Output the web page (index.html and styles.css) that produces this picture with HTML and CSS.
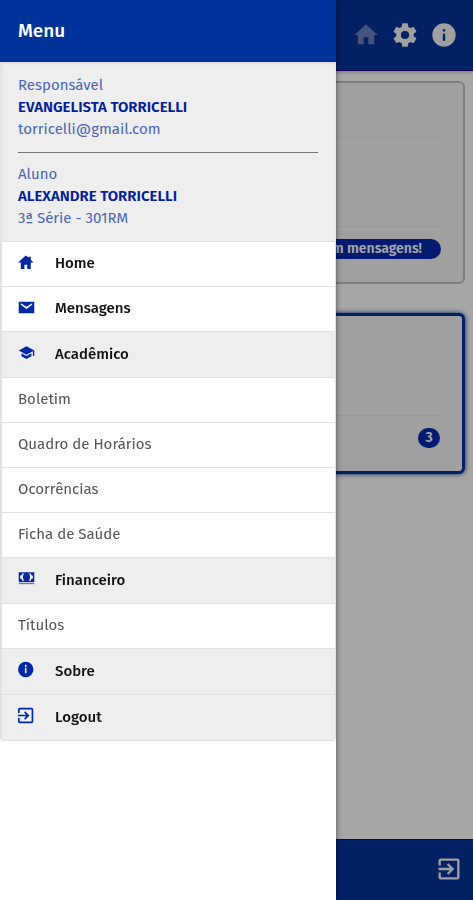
FILE: index.html
```html
<!DOCTYPE html>
<html lang="pt-BR">
<head>
<meta charset="utf-8">
<meta name="viewport" content="width=device-width, initial-scale=1">
<title>Menu</title>
<link rel="stylesheet" href="styles.css">
</head>
<body>
<svg class="sprite" aria-hidden="true">
  <symbol id="home" viewBox="0 0 24 24"><path d="M10 20v-6h4v6h5v-8h3L12 3 2 12h3v8z"/></symbol>
  <symbol id="home-small" viewBox="1 0 24 24"><path d="M10 21v-6h4v6h5v-9h4l-4-4V4h-3v1l-4-3L1 12h4v9z"/></symbol>
  <symbol id="mail" viewBox="0 0 24 24"><path d="M1 4h22v16H1zM4 6v2l8 6 8-6V6l-8 5z" fill-rule="evenodd"/></symbol>
  <symbol id="school" viewBox="1 0 22 24"><path d="M5 13.180v4L12 21l7-3.820v-4L12 17zM12 3L1 9l11 6 9-4.910V17h2V9z"/></symbol>
  <symbol id="cash" viewBox="0 0 24 24"><path fill-rule="evenodd" d="M1 3h22v14H1zM6 5a3 3 0 0 1-3 3v4a3 3 0 0 1 3 3h12a3 3 0 0 1 3-3V8a3 3 0 0 1-3-3z"/><ellipse cx="12" cy="10" rx="5" ry="6"/><path d="M1 18h22v2H1z" opacity=".6"/></symbol>
  <symbol id="info" viewBox="0 0 24 24"><path d="M12 2a10 10 0 1 0 0 20 10 10 0 0 0 0-20zm1 15h-2v-6h2zm0-8h-2V7h2z"/></symbol>
  <symbol id="info-small" viewBox="2 1 22 22"><path d="M12 2a10 10 0 1 0 0 20 10 10 0 0 0 0-20zm1 15h-2v-7h2zm0-8h-2V6h2z"/></symbol>
  <symbol id="gear" viewBox="0 0 24 24"><path d="M19.430 12.980c.04-.32.07-.64.07-.98s-.03-.66-.07-.98l2.110-1.650c.19-.15.24-.42.12-.64l-2-3.460c-.12-.22-.39-.3-.61-.22l-2.490 1c-.52-.4-1.080-.73-1.690-.98l-.38-2.650C14.460 2.180 14.250 2 14 2h-4c-.25 0-.46.18-.49.42l-.38 2.650c-.61.25-1.170.59-1.690.98l-2.490-1c-.23-.09-.49 0-.61.22l-2 3.460c-.13.22-.07.49.12.64l2.110 1.650c-.04.32-.07.65-.07.98s.03.66.07.98l-2.110 1.650c-.19.15-.24.42-.12.64l2 3.460c.12.22.39.3.61.22l2.490-1c.52.4 1.080.73 1.690.98l.38 2.650c.03.24.24.42.49.42h4c.25 0 .46-.18.49-.42l.38-2.650c.61-.25 1.170-.59 1.690-.98l2.490 1c.23.09.49 0 .61-.22l2-3.460c.12-.22.07-.49-.12-.64zM12 15.500a3.500 3.500 0 1 1 0-7 3.500 3.500 0 0 1 0 7z"/></symbol>
  <symbol id="exit" viewBox="0 0 24 24"><path d="M10.090 15.590L11.500 17l5-5-5-5-1.410 1.410L12.670 11H3v2h9.670zM19 3H5a2 2 0 0 0-2 2v4h2V5h14v14H5v-4H3v4a2 2 0 0 0 2 2h14a2 2 0 0 0 2-2V5a2 2 0 0 0-2-2z"/></symbol>
  <symbol id="exit-small" viewBox="3 2 20 20"><use href="#exit" width="24" height="24"/></symbol>
</svg>

<div class="page">
  <header class="topbar">
    <button class="tool" type="button" aria-label="Home" disabled><svg><use href="#home"/></svg></button>
    <button class="tool" type="button" aria-label="Configurações"><svg><use href="#gear"/></svg></button>
    <button class="tool" type="button" aria-label="Sobre"><svg><use href="#info"/></svg></button>
  </header>
  <main class="cards">
    <section class="card">
      <div class="card-head"></div>
      <div class="card-body"></div>
      <div class="card-foot"><span class="badge">Sem mensagens!</span></div>
    </section>
    <section class="card card-active">
      <div class="card-body"></div>
      <div class="card-foot"><span class="badge">3</span></div>
    </section>
  </main>
  <footer class="bottombar">
    <button class="tool" type="button" aria-label="Logout"><svg><use href="#exit"/></svg></button>
  </footer>
</div>

<div class="backdrop"></div>

<aside class="drawer">
  <h1 class="drawer-title">Menu</h1>
  <div class="profile">
    <div class="person">
      <p>Responsável</p>
      <p class="name">EVANGELISTA TORRICELLI</p>
      <p>torricelli@gmail.com</p>
    </div>
    <div class="person">
      <p>Aluno</p>
      <p class="name">ALEXANDRE TORRICELLI</p>
      <p>3ª Série - 301RM</p>
    </div>
  </div>
  <nav class="menu">
    <a class="item main" href="#"><svg><use href="#home-small"/></svg>Home</a>
    <a class="item main" href="#"><svg><use href="#mail"/></svg>Mensagens</a>
    <a class="item main shaded" href="#"><svg><use href="#school"/></svg>Acadêmico</a>
    <a class="item" href="#">Boletim</a>
    <a class="item" href="#">Quadro de Horários</a>
    <a class="item" href="#">Ocorrências</a>
    <a class="item" href="#">Ficha de Saúde</a>
    <a class="item main shaded" href="#"><svg><use href="#cash"/></svg>Financeiro</a>
    <a class="item" href="#">Títulos</a>
    <a class="item main shaded" href="#"><svg><use href="#info-small"/></svg>Sobre</a>
    <a class="item main shaded" href="#"><svg><use href="#exit-small"/></svg>Logout</a>
  </nav>
</aside>
</body>
</html>
```
FILE: styles.css
```css
* {
  box-sizing: border-box;
}

body {
  margin: 0;
  font-family: "Fira Sans", "Noto Sans", sans-serif;
  font-size: 15px;
  line-height: 22px;
  background: #fff;
}

h1,
p {
  margin: 0;
}

svg {
  display: block;
  fill: currentColor;
}

.sprite {
  display: none;
}

.page {
  display: flex;
  flex-direction: column;
  min-height: 100vh;
}

.topbar,
.bottombar {
  display: flex;
  align-items: center;
  justify-content: flex-end;
  background: #039;
}

.topbar {
  gap: 11px;
  height: 71px;
  padding: 0 15px;
  border-bottom: 1px solid #1e0080;
  box-shadow: 0 1px 4px rgba(0, 0, 0, 0.3);
}

.bottombar {
  height: 61px;
  padding: 0 10px 2px;
  border-top: 1px solid #1e0080;
}

.tool {
  padding: 0;
  border: 0;
  background: none;
  color: #f4f4f4;
}

.tool svg {
  width: 28px;
  height: 28px;
}

.tool:disabled {
  color: #6a82bc;
}

.cards {
  display: flex;
  flex: 1;
  flex-direction: column;
  gap: 29px;
  padding: 10px 8px;
}

.card {
  padding: 0 22px 11px;
  border: 2px solid #c0c0c0;
  border-radius: 6px;
  background: #f6f6f6;
}

.card-active {
  border: 3px solid #039;
  box-shadow: 0 0 5px #039;
}

.card-head {
  height: 55px;
  border-bottom: 1px solid #eaeaea;
}

.card-body {
  height: 89px;
  border-bottom: 1px solid #eaeaea;
}

.card-active .card-body {
  height: 100px;
}

.card-foot {
  display: flex;
  align-items: center;
  justify-content: flex-end;
  height: 44px;
}

.badge {
  min-width: 22px;
  padding: 0 19px;
  border-radius: 10px;
  background: #002aae;
  color: #fff;
  font-size: 14px;
  font-weight: 600;
  line-height: 20px;
  text-align: center;
}

.card-active .badge {
  padding: 0 7px;
}

.backdrop {
  position: fixed;
  inset: 0;
  background: rgba(0, 0, 0, 0.35);
}

.drawer {
  position: fixed;
  inset: 0 auto 0 0;
  width: 336px;
  max-width: 85vw;
  overflow-y: auto;
  background: #fff;
  box-shadow: 0 0 6px rgba(0, 0, 0, 0.5);
}

.drawer-title {
  padding: 20px 18px;
  background: #039;
  color: #fff;
  font-size: 19px;
  font-weight: 500;
  line-height: 22px;
}

.profile {
  padding: 12px 18px 12px 16px;
  border-left: 2px solid #e4e4e4;
  background: #eee;
  color: #4966b5;
  box-shadow: inset 0 2px 2px #ddd;
}

.person + .person {
  margin-top: 12px;
  padding-top: 10px;
  border-top: 1px solid #777;
}

.name {
  color: #00209c;
  font-weight: 600;
}

.menu {
  border: solid #e2e2e2;
  border-width: 0 1px 1px 2px;
  border-radius: 0 0 4px 4px;
}

.item {
  display: flex;
  align-items: center;
  gap: 20px;
  height: 45px;
  padding: 0 16px 2px;
  border-top: 1px solid #e2e2e2;
  color: #555;
  text-decoration: none;
}

.main {
  color: #111;
  font-weight: 500;
}

.main svg {
  width: 17px;
  height: 17px;
  margin-bottom: 2px;
  color: #0029a3;
}

.shaded {
  height: 46px;
  background: #eee;
}
```
